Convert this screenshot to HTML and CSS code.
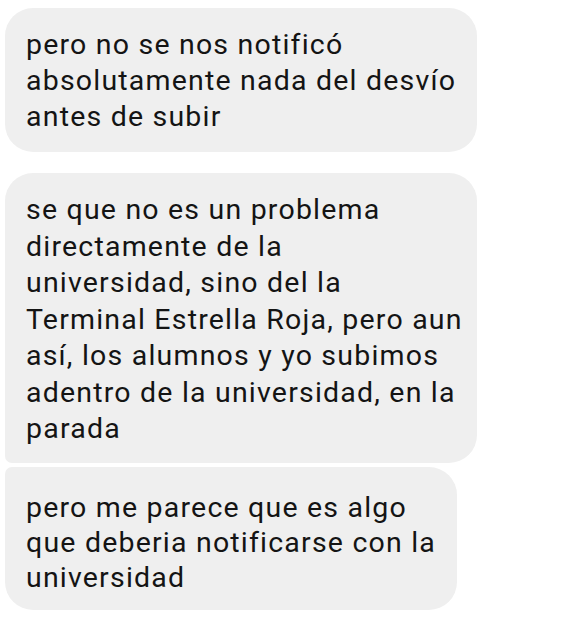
FILE: index.html
```html
<!DOCTYPE html>
<html lang="es">
  <head>
    <meta charset="UTF-8" />
    <title>Chat</title>
    <link rel="stylesheet" href="styles.css">
  </head>
  <body>
    <div class="chat">
      <div class="bubble single wide">
        pero no se nos notificó<br />
        absolutamente nada del desvío<br />
        antes de subir
      </div>
      <div class="group">
        <div class="bubble first wide">
          se que no es un problema<br />
          directamente de la<br />
          universidad, sino del la<br />
          Terminal Estrella Roja, pero aun<br />
          así, los alumnos y yo subimos<br />
          adentro de la universidad, en la<br />
          parada
        </div>
        <div class="bubble last narrow">
          pero me parece que es algo<br />
          que deberia notificarse con la<br />
          universidad
        </div>
      </div>
    </div>
  </body>
</html>
```

FILE: styles.css
```css
body, html {
  margin: 0;
  background: #fff;
}

.chat {
  padding: 8px 0 0 5px;
  display: flex;
  flex-direction: column;
  gap: 21px;
}

.group {
  display: flex;
  flex-direction: column;
  gap: 4px;
}

.bubble {
  box-sizing: border-box;
  background: #efefef;
  color: #141414;
  font-family: Roboto, "Noto Sans", sans-serif;
  font-size: 28.5px;
  letter-spacing: 1.2px;
  line-height: 36px;
  padding: 19px 18px 17px 21px;
  border-radius: 28px;
  white-space: nowrap;
}

.wide {
  width: 472px;
}

.narrow {
  width: 452px;
}

.first {
  border-bottom-left-radius: 7px;
  line-height: 36.5px;
  padding-bottom: 15px;
}

.last {
  border-top-left-radius: 7px;
  line-height: 35px;
  padding-top: 23px;
  padding-bottom: 15px;
}
```
